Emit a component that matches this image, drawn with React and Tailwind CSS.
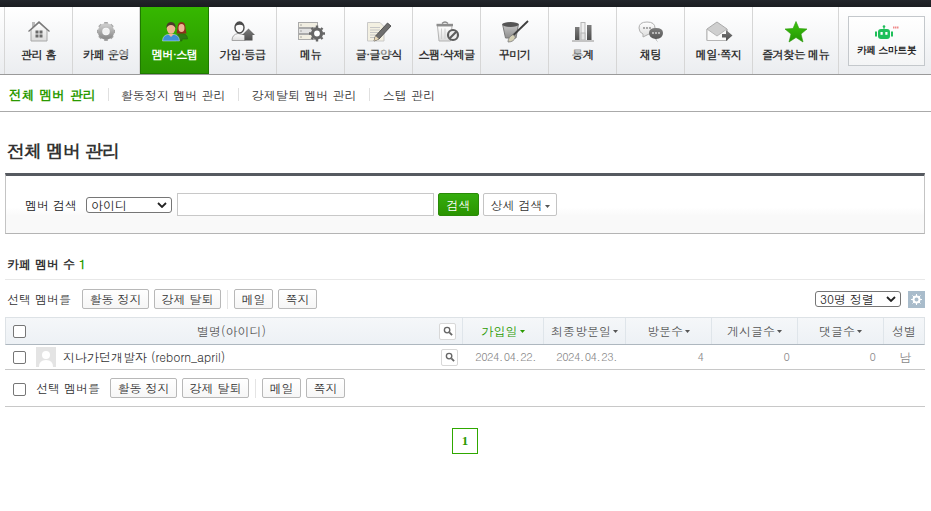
const font = "font-['Dotum','Noto_Sans_CJK_KR',sans-serif]";

const Ic = ({ children }) => (
  <svg width="28" height="23" viewBox="0 0 28 23" className="block">{children}</svg>
);

const Defs = () => (
  <svg width="0" height="0" className="absolute">
    <defs>
      <linearGradient id="gr" x1="0" y1="0" x2="0" y2="1">
        <stop offset="0" stopColor="#c9c9c9" />
        <stop offset="1" stopColor="#8e8e8e" />
      </linearGradient>
      <linearGradient id="dk" x1="0" y1="0" x2="0" y2="1">
        <stop offset="0" stopColor="#7d7d7d" />
        <stop offset="1" stopColor="#4d4d4d" />
      </linearGradient>
      <linearGradient id="lt" x1="0" y1="0" x2="0" y2="1">
        <stop offset="0" stopColor="#ffffff" />
        <stop offset="1" stopColor="#dcdcdc" />
      </linearGradient>
      <linearGradient id="st" x1="0" y1="0" x2="0" y2="1">
        <stop offset="0" stopColor="#3cc40c" />
        <stop offset="1" stopColor="#239404" />
      </linearGradient>
    </defs>
  </svg>
);

const icons = {
  home: (
    <Ic>
      <rect x="7" y="2" width="3" height="5" fill="#bbb" />
      <path d="M6 10 V21 H22 V10 L14 3 Z" fill="url(#lt)" stroke="#a8a8a8" />
      <path d="M3.500 11.500 L14 2 L24.500 11.500" fill="none" stroke="#777" strokeWidth="1.3" />
      <path d="M10.500 10.500h3v3h-3zM14.500 10.500h3v3h-3zM10.500 14.500h3v3h-3zM14.500 14.500h3v3h-3z" fill="#6a6a6a" />
    </Ic>
  ),
  gear: (
    <Ic>
      <path d="M14 5V2M14 21V18M5 11.500H8M20 11.500H23M7.500 5L9.800 7.300M18.200 15.700L20.500 18M20.500 5L18.200 7.300M9.800 15.700L7.500 18" stroke="#a6a6a6" strokeWidth="3.600" />
      <circle cx="14" cy="11.500" r="6" fill="none" stroke="url(#gr)" strokeWidth="4.500" />
      <circle cx="14" cy="11.500" r="3" fill="#f1f1f1" />
    </Ic>
  ),
  members: (
    <Ic>
      <path d="M15 21 Q15 13.500 20 13.500 Q26.500 13.500 26.500 19 V19 H21 V21 Z" fill="#2f7a14" stroke="#1f5c08" strokeWidth=".5" />
      <path d="M16.500 8 Q16.500 2 20.500 2 Q24.500 2 24.500 8 L25.500 13.500 H15.500 Z" fill="#8c2f1c" />
      <ellipse cx="20.500" cy="8" rx="3" ry="4" fill="#eeb696" />
      <path d="M1.500 21 Q1.500 14 10 14 Q18.500 14 18.500 21 Z" fill="#3f8fd6" stroke="#fff" strokeWidth=".4" />
      <path d="M7 14 L10 17 L13 14 Z" fill="#eeb696" />
      <ellipse cx="10" cy="8.500" rx="4.200" ry="5.200" fill="#efb793" />
      <path d="M5.500 8.500 Q5 2 10 2 Q15 2 14.500 8.500 Q13.500 5 10 5 Q6.500 5 5.500 8.500 Z" fill="#4d3a2b" />
    </Ic>
  ),
  join: (
    <Ic>
      <path d="M3 20.500 Q3 14.500 9 13.500 L16 15 V20.500 Z" fill="url(#lt)" stroke="#a6a6a6" />
      <ellipse cx="10.500" cy="7.500" rx="4.500" ry="5.500" fill="#fafafa" stroke="#4a4a4a" strokeWidth="1.400" />
      <path d="M6.500 6 Q7 2 10.500 2 Q14 2 14.500 6 Q11 3.500 6.500 6 Z" fill="#4a4a4a" />
      <path d="M13 15 L19.500 8.500 L26 15 H23.500 V20.500 H15.500 V15 Z" fill="url(#dk)" />
    </Ic>
  ),
  menu: (
    <Ic>
      <rect x="1.500" y="2.500" width="19" height="5" fill="#f1eee2" stroke="#aaa" />
      <rect x="1.500" y="8.500" width="19" height="5" fill="#e2e2e2" stroke="#aaa" />
      <rect x="1.500" y="14.500" width="19" height="5" fill="#f1eee2" stroke="#aaa" />
      <path d="M3.500 5h1M3.500 11h1M3.500 17h1" stroke="#666" />
      <circle cx="20" cy="13.500" r="4.500" fill="#fff" stroke="#666" strokeWidth="3.200" />
      <path d="M20 5.500V8M20 19V21.500M12 13.500H14.500M25.500 13.500H28M14.500 8L16 9.500M24 17.500L25.500 19M25.500 8L24 9.500M16 17.500L14.500 19" stroke="#666" strokeWidth="2.400" />
    </Ic>
  ),
  write: (
    <Ic>
      <path d="M2.500 2.500 H15 L19 6.500 V21 H2.500 Z" fill="#f3f0e2" stroke="#c9c9c9" />
      <path d="M5 7.500H15M5 10H15M5 12.500H13M5 15H11M5 17.500H10" stroke="#c6c6c6" />
      <path d="M9 21 L10.500 16 L22.500 3 L26 6 L14 19 Z" fill="#6f6f6f" stroke="#3d3d3d" strokeWidth=".8" />
      <path d="M9 21 L10.500 16 L14 19 Z" fill="#e8d8b8" />
    </Ic>
  ),
  trash: (
    <Ic>
      <path d="M4.500 6 H19 L17.500 21 H6 Z" fill="url(#lt)" stroke="#b4b4b4" />
      <path d="M3.500 5 H20" stroke="#8d8d8d" strokeWidth="2.400" />
      <path d="M9 3.500 Q12 .5 15 3.500" fill="none" stroke="#888" strokeWidth="1.400" />
      <path d="M8.500 8.500V19M12 8.500V19" stroke="#cfcfcf" />
      <circle cx="20" cy="15" r="5" fill="#efefef" stroke="#5e5e5e" strokeWidth="2.200" />
      <path d="M16.500 18.500 L23.500 11.500" stroke="#5e5e5e" strokeWidth="2.200" />
    </Ic>
  ),
  brush: (
    <Ic>
      <path d="M1.500 4 H17.500 L15 18 H4.500 Z" fill="url(#gr)" stroke="#7a7a7a" />
      <ellipse cx="9.500" cy="4.500" rx="8" ry="2.400" fill="#555" />
      <path d="M12 15.500 L27 1" stroke="#3f3f3f" strokeWidth="1.800" />
      <path d="M7 22 Q7 17 12 14.500 L14.500 17 Q13 22 7 22 Z" fill="#d4cfb3" stroke="#777" strokeWidth=".8" />
    </Ic>
  ),
  chart: (
    <Ic>
      <rect x="6" y="7" width="4.500" height="13" fill="url(#dk)" />
      <rect x="12" y="2.500" width="4" height="17.500" fill="#f0f0f0" stroke="#b6b6b6" />
      <rect x="12" y="13" width="4" height="7" fill="#e3e3e3" stroke="#b6b6b6" />
      <rect x="18" y="5" width="4.500" height="15" fill="url(#dk)" />
      <rect x="3" y="20" width="22" height="2" fill="#c4c4c4" />
    </Ic>
  ),
  chat: (
    <Ic>
      <path d="M12 14 Q18 13.500 18 8 Q18 2 10 2 Q2 2 2 8 Q2 12.500 6 14 L6 17 Z" fill="url(#lt)" stroke="#b0b0b0" />
      <circle cx="7" cy="8" r=".9" fill="#888" />
      <circle cx="10" cy="8" r=".9" fill="#888" />
      <circle cx="13" cy="8" r=".9" fill="#888" />
      <path d="M19 19 Q26 18.500 26 13 Q26 8 19 8 Q12 8 12 13 Q12 18 18.500 19 L21 22.500 Z" fill="url(#dk)" />
      <circle cx="16" cy="13" r=".9" fill="#ddd" />
      <circle cx="19" cy="13" r=".9" fill="#ddd" />
      <circle cx="22" cy="13" r=".9" fill="#ddd" />
    </Ic>
  ),
  mail: (
    <Ic>
      <path d="M2 9 L12 2 L22 9 V20.500 H2 Z" fill="#cfcfcf" stroke="#aaa" />
      <path d="M2 9 L12 16 L22 9 V20.500 H2 Z" fill="#fafafa" stroke="#b6b6b6" />
      <path d="M17 14 H21 V10 L27.500 15.500 L21 21 V17.500 H17 Z" fill="url(#dk)" />
    </Ic>
  ),
  star: (
    <Ic>
      <path d="M14 1.500 L17 8.500 L25 9 L19 14 L21 22 L14 17.500 L7 22 L9 14 L3 9 L11 8.500 Z" fill="url(#st)" stroke="#2a9a08" strokeWidth=".6" />
    </Ic>
  ),
};

const tabs = [
  ["home", "관리 홈", "w-[68px]"],
  ["gear", "카페 운영", "w-[67px]"],
  ["members", "멤버·스탭", "w-[69px]", true],
  ["join", "가입·등급", "w-[68px]"],
  ["menu", "메뉴", "w-[68px]"],
  ["write", "글·글양식", "w-[68px]"],
  ["trash", "스팸·삭제글", "w-[68px]"],
  ["brush", "꾸미기", "w-[68px]"],
  ["chart", "통계", "w-[68px]"],
  ["chat", "채팅", "w-[68px]"],
  ["mail", "메일·쪽지", "w-[68px]"],
  ["star", "즐겨찾는 메뉴", "w-[86px]"],
];

function Tab({ icon, label, w, active }) {
  return (
    <div
      className={`${w} h-[67px] shrink-0 flex flex-col items-center pt-[13px] ${
        active
          ? "bg-[linear-gradient(#36b800,#2a9400)] border-x border-b border-[#1f7a00] text-white"
          : "border-r border-[#d6d6d6] text-[#333]"
      }`}
    >
      <div className="h-[23px]">{icons[icon]}</div>
      <div className="mt-[4px] text-[11.5px] leading-[14px] font-bold tracking-[-0.8px] whitespace-nowrap">
        {label}
      </div>
    </div>
  );
}

const Btn = ({ children, w }) => (
  <button className={`${w} h-[20px] bg-[linear-gradient(#fff,#f6f6f6)] border border-[#b8b8b8] rounded-[2px] text-[12px] leading-[18px] text-[#333] whitespace-nowrap`}>
    {children}
  </button>
);

const Caret = ({ c = "#555" }) => (
  <svg width="5" height="3" viewBox="0 0 5 3" className="inline-block ml-[2px] align-middle">
    <path d="M0 0H5L2.500 3Z" fill={c} />
  </svg>
);

const Check = ({ cls = "" }) => (
  <span className={`block w-[13px] h-[13px] rounded-[2px] border border-[#767676] bg-white ${cls}`} />
);

const Mag = ({ cls }) => (
  <span className={`flex items-center justify-center w-[17px] h-[17px] bg-white border border-[#d8d8d8] rounded-[2px] ${cls}`}>
    <svg width="10" height="10" viewBox="0 0 11 11">
      <circle cx="4.500" cy="4.500" r="3" fill="none" stroke="#666" strokeWidth="1.500" />
      <path d="M7 7L10 10" stroke="#666" strokeWidth="2" />
    </svg>
  </span>
);

const Sel = ({ w, label }) => (
  <div className={`${w} h-[16px] bg-white border border-[#767676] rounded-[3px] flex items-center justify-between pl-[4px] pr-[4px] text-[12px] leading-[14px] text-[#222]`}>
    <span>{label}</span>
    <svg width="10" height="6" viewBox="0 0 10 6">
      <path d="M1 1L5 5L9 1" fill="none" stroke="#222" strokeWidth="1.800" />
    </svg>
  </div>
);

const Head = ({ w, children, cls = "text-[#555]", last, sort = "#555" }) => (
  <div className={`${w} h-full shrink-0 flex items-center justify-center text-[12px] ${cls} ${last ? "" : "border-r border-[#dfe5ea]"}`}>
    {children}
    {sort && <Caret c={sort} />}
  </div>
);

const MemberActions = () => (
  <>
    <Btn w="w-[67px]">활동 정지</Btn>
    <Btn w="w-[67px] ml-[5px]">강제 탈퇴</Btn>
    <span className="w-px h-[19px] bg-[#e4e4e4] mx-[6px]" />
    <Btn w="w-[39px]">메일</Btn>
    <Btn w="w-[39px] ml-[5px]">쪽지</Btn>
  </>
);

const SubSep = () => <span className="w-px h-[13px] bg-[#e0e0e0] mx-[12.5px]" />;

export default function App() {
  return (
    <div className={`w-[931px] h-[511px] overflow-hidden bg-white ${font}`}>
      <Defs />
      <div className="h-[7px] bg-[linear-gradient(#23262b,#1b1d21)]" />

      <div className="h-[68px] bg-[linear-gradient(#ffffff,#ebedf0)] border-b border-[#9a9a9a] flex">
        <div className="w-[5px] shrink-0 border-r border-[#d6d6d6] h-[67px]" />
        {tabs.map(([i, l, w, a]) => (
          <Tab key={l} icon={i} label={l} w={w} active={a} />
        ))}
        <div className="ml-[9px] mt-[9px] w-[77px] h-[50px] border border-[#c4c8cc] bg-[linear-gradient(#ffffff,#f4f5f6)] flex flex-col items-center pt-[8px]">
          <svg width="24" height="15" viewBox="0 0 24 15" className="block">
            <circle cx="9" cy="1.500" r="1.300" fill="#1fbf5a" />
            <path d="M9 2V4" stroke="#1fbf5a" />
            <rect x="3" y="4" width="12" height="10" rx="3" fill="#1fbf5a" />
            <rect x="0" y="6.500" width="2" height="5" fill="#1fbf5a" />
            <rect x="16" y="6.500" width="2" height="5" fill="#1fbf5a" />
            <rect x="5.500" y="7" width="2.200" height="2.800" fill="#fff" />
            <rect x="10.300" y="7" width="2.200" height="2.800" fill="#fff" />
            <path d="M18 2.500H24" stroke="#f08a8a" strokeWidth="2" strokeDasharray="1.500 .5" />
          </svg>
          <div className="mt-[4px] text-[10px] leading-[13px] font-bold tracking-[-0.6px] text-[#222] whitespace-nowrap">
            카페 스마트봇
          </div>
        </div>
      </div>

      <div className="h-[37px] pt-[3px] border-b border-[#aaa] flex items-center pl-[9px] text-[12px] tracking-[0.1px] text-[#333] bg-white">
        <span className="font-bold text-[13px] tracking-normal text-[#2a9a00]">전체 멤버 관리</span>
        <span className="w-px h-[13px] bg-[#e0e0e0] mx-[12px]" />
        <span>활동정지 멤버 관리</span>
        <SubSep />
        <span>강제탈퇴 멤버 관리</span>
        <SubSep />
        <span>스탭 관리</span>
      </div>

      <div className="pl-[5px] pr-[6px]">
        <h1 className="pl-[2px] mt-[26px] h-[26px] text-[18px] leading-[26px] font-bold tracking-[-1px] text-[#333]">
          전체 멤버 관리
        </h1>
        <div className="mt-[9px] h-[61px] border-t-[3px] border-t-[#565a60] border-x border-b border-x-[#c4c4c4] border-b-[#b4b4b4] bg-[linear-gradient(#ffffff_55%,#f9f9f9_70%)] flex items-center pl-[19px]">
          <span className="text-[12px] text-[#222] mr-[9px]">멤버 검색</span>
          <Sel w="w-[86px]" label="아이디" />
          <div className="ml-[5px] w-[257px] h-[23px] bg-white border border-[#c8c8c8]" />
          <button className="ml-[4px] w-[41px] h-[23px] rounded-[2px] border border-[#2a8a08] bg-[linear-gradient(#35ad0e,#2a9400)] text-white text-[12px]">
            검색
          </button>
          <button className="ml-[4px] w-[74px] h-[23px] rounded-[2px] border border-[#c4c4c4] bg-white text-[12px] text-[#333]">
            상세 검색
            <Caret c="#555" />
          </button>
        </div>

        <div className="mt-[21px] h-[25px] border-b border-[#e8e8e8] flex items-start pl-[2px] text-[12px] leading-[18px] font-bold text-[#333]">
          카페 멤버 수<span className="ml-[4px] text-[#2a9a00]">1</span>
        </div>

        <div className="mt-[9px] h-[20px] flex items-center pl-[2px] text-[12px] text-[#333]">
          <span className="mr-[11px]">선택 멤버를</span>
          <MemberActions />
          <div className="ml-auto flex items-center">
            <Sel w="w-[86px]" label="30명 정렬" />
            <span className="ml-[7px] w-[17px] h-[17px] bg-[#a9bccb] flex items-center justify-center">
              <svg width="11" height="11" viewBox="0 0 11 11">
                <circle cx="5.500" cy="5.500" r="3" fill="none" stroke="#fff" strokeWidth="2" />
                <path d="M5.500 0V2M5.500 9V11M0 5.500H2M9 5.500H11M1.500 1.500L3 3M8 8L9.500 9.500M9.500 1.500L8 3M3 8L1.500 9.500" stroke="#fff" />
              </svg>
            </span>
          </div>
        </div>

        <div className="mt-[8px] h-[28px] border-t border-t-[#dde2e6] border-b border-b-[#aeb7bf] border-x border-x-[#dde2e6] bg-[linear-gradient(#f5f7f9,#edf1f5)] flex items-center">
          <div className="w-[457px] h-full shrink-0 flex items-center relative border-r border-[#dfe5ea]">
            <Check cls="ml-[7px]" />
            <span className="absolute left-[191px] text-[12px] text-[#555]">별명(아이디)</span>
            <Mag cls="ml-auto mr-[6px]" />
          </div>
          <Head w="w-[81px]" cls="text-[#2a9a00]" sort="#2a9a00">가입일</Head>
          <Head w="w-[82px]">최종방문일</Head>
          <Head w="w-[86px]">방문수</Head>
          <Head w="w-[86px]">게시글수</Head>
          <Head w="w-[86px]">댓글수</Head>
          <Head w="w-[40px]" last sort={null}>성별</Head>
        </div>

        <div className="h-[25px] border-b border-[#c8c8c8] flex items-center text-[11px] text-[#888]">
          <div className="w-[458px] shrink-0 flex items-center">
            <Check cls="ml-[8px]" />
            <span className="ml-[10px] w-[20px] h-[20px] bg-[#e4e4e4] flex items-end justify-center overflow-hidden">
              <svg width="20" height="20" viewBox="0 0 20 20">
                <circle cx="10" cy="8" r="4" fill="#fff" />
                <path d="M3 20Q3 13 10 13Q17 13 17 20Z" fill="#fff" />
              </svg>
            </span>
            <span className="ml-[7px] text-[12px] text-[#333] whitespace-nowrap">지나가던개발자 (reborn_april)</span>
            <Mag cls="ml-auto mr-[5px]" />
          </div>
          <div className="w-[81px] shrink-0 text-center pl-[4px] tracking-[-0.5px] [word-spacing:-2px]">2024. 04. 22.</div>
          <div className="w-[82px] shrink-0 text-center pl-[3px] tracking-[-0.5px] [word-spacing:-2px]">2024. 04. 23.</div>
          <div className="w-[85px] shrink-0 text-right pr-[7px]">4</div>
          <div className="w-[86px] shrink-0 text-right pr-[7px]">0</div>
          <div className="w-[86px] shrink-0 text-right pr-[7px]">0</div>
          <div className="w-[42px] shrink-0 text-center pl-[3px] text-[12px]">남</div>
        </div>

        <div className="h-[37px] border-b border-[#c8c8c8] flex items-center text-[12px] text-[#333]">
          <Check cls="ml-[8px] mt-[2px]" />
          <span className="ml-[10px] mr-[10px]">선택 멤버를</span>
          <MemberActions />
        </div>

        <div className="mt-[21px] flex justify-center">
          <span className="w-[26px] h-[26px] border border-[#2fa800] flex items-center justify-center text-[13px] font-bold font-['Liberation_Serif',serif] text-[#2a9a00]">
            1
          </span>
        </div>
      </div>
    </div>
  );
}
